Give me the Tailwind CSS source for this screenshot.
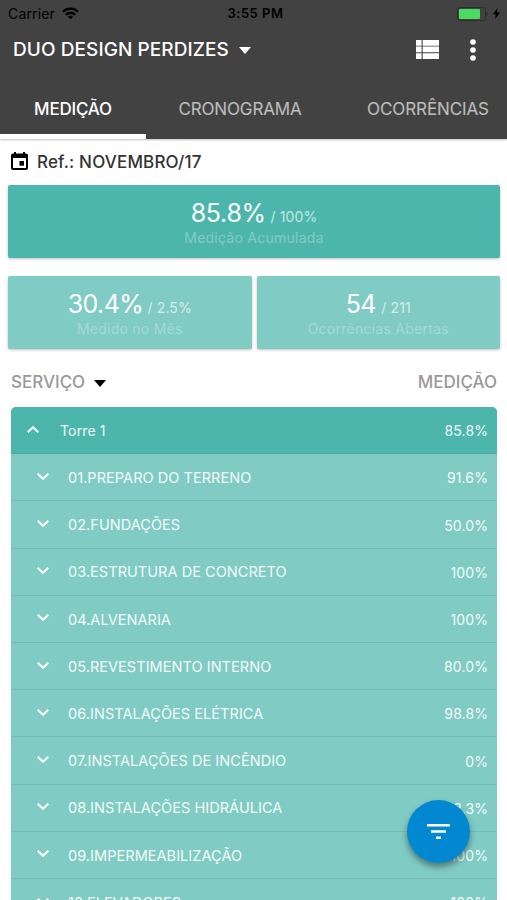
<!DOCTYPE html>
<html lang="pt-BR">
<head>
    <meta charset="UTF-8">
    <meta name="viewport" content="width=device-width, initial-scale=1.0">
    <title>Duo Design Perdizes</title>
    <script src="https://cdn.jsdelivr.net/npm/@tailwindcss/browser@4"></script>
</head>
<body class="h-[900px] overflow-hidden bg-white font-['Inter','Liberation_Sans',sans-serif] whitespace-nowrap">

    <!-- Status bar + toolbar + tabs -->
    <header class="h-[139px] bg-[#424242] flex flex-col shadow-[0_1px_2px_rgba(0,0,0,0.25)]">
        <div class="h-7 pl-2 pr-[7px] grid grid-cols-3 items-center text-black">
            <div class="flex items-center gap-[7px]">
                <span class="-mt-px text-[14px] tracking-[0.15px]">Carrier</span>
                <svg class="w-[17px] h-[13px] -mt-px" viewBox="0 0 17 13" fill="none" stroke="currentColor" stroke-width="2.3">
                    <path d="M1 4.8a10.6 10.6 0 0 1 15 0"/>
                    <path d="M3.8 7.7a6.7 6.7 0 0 1 9.4 0"/>
                    <path d="M8.5 12.3 5.9 9.7a3.7 3.7 0 0 1 5.2 0z" fill="currentColor" stroke="none"/>
                </svg>
            </div>
            <div class="pl-[3px] text-center text-[13px] font-semibold tracking-[0.5px]">3:55 PM</div>
            <div class="flex items-center justify-end gap-[5px]">
                <svg class="w-[31px] h-[14px] -mt-px" viewBox="0 0 31 14">
                    <rect x="0.5" y="0.5" width="28" height="13" rx="3" fill="none" stroke="#2b2b2b"/>
                    <rect x="2" y="2" width="21" height="10" rx="1" fill="#4cd964"/>
                    <path d="M29.6 4.8c1.6.8 1.6 3.6 0 4.4z" fill="#2b2b2b"/>
                </svg>
                <svg class="w-[7px] h-[11px] -mt-px" viewBox="0 0 7 11" fill="currentColor">
                    <path d="M4.5 0 0 6.2h2.8L2 11l5-6.5H4z"/>
                </svg>
            </div>
        </div>

        <div class="h-[43px] pl-[13px] pr-[31px] flex items-center text-white">
            <h1 class="pt-[2px] text-[19px] font-medium tracking-[0.08px]">DUO DESIGN PERDIZES</h1>
            <svg class="ml-[10px] mt-px w-3 h-[7px]" viewBox="0 0 12 7" fill="currentColor"><path d="M0 0h12L6 7z"/></svg>
            <svg class="ml-auto w-[23px] h-[19px]" viewBox="0 0 23 19" fill="currentColor">
                <path d="M0 0h5.6v5.7H0zM0 6.6h5.6v5.7H0zM0 13.2h5.6v5.8H0zM6.7 0H23v5.7H6.7zM6.7 6.6H23v5.7H6.7zM6.7 13.2H23v5.8H6.7z"/>
            </svg>
            <svg class="ml-[31px] w-[6px] h-[22px]" viewBox="0 0 6 22" fill="currentColor">
                <circle cx="3" cy="3" r="2.8"/><circle cx="3" cy="11" r="2.8"/><circle cx="3" cy="19" r="2.8"/>
            </svg>
        </div>

        <nav class="flex-1 flex text-[17px] text-white/65 overflow-hidden">
            <a class="w-[146px] shrink-0 flex items-center justify-center pt-[14px] border-b-[5px] border-white font-medium text-white tracking-[-0.2px]">MEDIÇÃO</a>
            <a class="w-[188px] shrink-0 flex items-center justify-center pt-[9px] tracking-[-0.15px]">CRONOGRAMA</a>
            <a class="w-[188px] shrink-0 flex items-center justify-center pt-[9px] tracking-[-0.1px]">OCORRÊNCIAS</a>
        </nav>
    </header>

    <main>
        <!-- Reference month -->
        <div class="h-[46px] pl-[11px] flex items-center gap-[9px] text-[#333]">
            <svg class="w-[17px] h-[18px] -mt-[2px] text-black" viewBox="0 0 17 18" fill="currentColor">
                <path fill-rule="evenodd" d="M3 0h2v1.5h7V0h2v1.5h1a2 2 0 0 1 2 2V16a2 2 0 0 1-2 2H2a2 2 0 0 1-2-2V3.5a2 2 0 0 1 2-2h1zM2 6v10h13V6z"/>
                <path d="M8.5 9H13v4.7H8.5z"/>
            </svg>
            <span class="pt-[2px] text-[17px] font-medium tracking-[0.17px]">Ref.: NOVEMBRO/17</span>
        </div>

        <!-- Summary cards -->
        <div class="pl-2 pr-[7px] grid grid-cols-2 gap-x-[5px] gap-y-[18px]">
            <div class="col-span-2 h-[73px] pt-[13px] rounded-[2px] bg-[#4db6ac] shadow-[0_1px_3px_rgba(0,0,0,0.25)] text-center text-white">
                <p class="h-[31px] leading-[31px] text-[25px] tracking-[-0.3px]">85.8% <span class="-ml-[2px] text-[14px] tracking-[0.1px] text-white/65">/ 100%</span></p>
                <p class="h-[18px] leading-[18px] text-[14px] tracking-[0.25px] text-white/30">Medição Acumulada</p>
            </div>
            <div class="h-[73px] pt-[13px] rounded-[2px] bg-[#80cbc4] shadow-[0_1px_3px_rgba(0,0,0,0.25)] text-center text-white">
                <p class="h-[31px] leading-[31px] text-[25px] tracking-[-0.6px]">30.4% <span class="-ml-[2px] text-[14px] tracking-[0.1px] text-white/65">/ 2.5%</span></p>
                <p class="h-[18px] leading-[18px] text-[14px] tracking-[0.25px] text-white/30">Medido no Mês</p>
            </div>
            <div class="h-[73px] pt-[13px] rounded-[2px] bg-[#80cbc4] shadow-[0_1px_3px_rgba(0,0,0,0.25)] text-center text-white">
                <p class="h-[31px] leading-[31px] text-[25px] tracking-[-0.6px]">54 <span class="-ml-px text-[14px] tracking-[0.1px] text-white/65">/ 211</span></p>
                <p class="h-[18px] leading-[18px] text-[14px] tracking-[0.25px] text-white/30">Ocorrências Abertas</p>
            </div>
        </div>

        <!-- List heading -->
        <div class="h-[58px] pt-[10px] pl-[11px] pr-[10px] flex items-center text-[17px] font-medium text-[#999]">
            <span>SERVIÇO</span>
            <svg class="ml-[9px] w-3 h-[7px] text-black" viewBox="0 0 12 7" fill="currentColor"><path d="M0 0h12L6 7z"/></svg>
            <span class="ml-auto">MEDIÇÃO</span>
        </div>

        <div class="ml-[11px] mr-[10px] rounded-t-[5px] overflow-hidden bg-[#80cbc4] text-[14px] text-white/90">
            <div class="h-[47.3px] pl-[16px] pr-[9px] flex items-center bg-[#4db6ac] border-b border-[#46aaa0]">
                <svg class="w-3 h-[7px] -mt-[2px] text-white" viewBox="0 0 12 7" fill="none" stroke="currentColor" stroke-width="2"><path d="M.7 6.3 6 1.2l5.3 5.1"/></svg>
                <span class="ml-[21px] tracking-[0.15px]">Torre 1</span>
                <span class="ml-auto tracking-[0.1px]">85.8%</span>
            </div>
            <div id="service-list"></div>
        </div>
    </main>

    <!-- Filter button -->
    <button class="fixed left-[407px] top-[800px] size-[63px] rounded-full bg-[#0288d1] text-white flex items-center justify-center shadow-[0_4px_6px_rgba(0,0,0,0.4)]">
        <svg class="w-[23px] h-[15px]" viewBox="0 0 23 15" fill="currentColor"><path d="M0 0h23v2.6H0zM4 6.2h15v2.6H4zM9 12.4h5V15H9z"/></svg>
    </button>

    <script>
        const services = [
            { name: "01.PREPARO DO TERRENO", value: "91.6%" },
            { name: "02.FUNDAÇÕES", value: "50.0%" },
            { name: "03.ESTRUTURA DE CONCRETO", value: "100%" },
            { name: "04.ALVENARIA", value: "100%" },
            { name: "05.REVESTIMENTO INTERNO", value: "80.0%" },
            { name: "06.INSTALAÇÕES ELÉTRICA", value: "98.8%" },
            { name: "07.INSTALAÇÕES DE INCÊNDIO", value: "0%" },
            { name: "08.INSTALAÇÕES HIDRÁULICA", value: "93.3%" },
            { name: "09.IMPERMEABILIZAÇÃO", value: "100%" },
            { name: "10.ELEVADORES", value: "100%" },
        ];

        document.getElementById('service-list').innerHTML = services.map(service => `
            <div class="h-[47.2px] pl-[26px] pr-[9px] flex items-center border-b border-[#74bdb6]">
                <svg class="w-3 h-[7px] -mt-[2px] text-white" viewBox="0 0 12 7" fill="none" stroke="currentColor" stroke-width="2"><path d="M.7.7 6 5.8 11.3.7"/></svg>
                <span class="ml-[19px] pt-px text-[14.5px] tracking-[0.05px]">${service.name}</span>
                <span class="ml-auto pt-px tracking-[0.1px]">${service.value}</span>
            </div>
        `).join('');
    </script>

</body>
</html>
